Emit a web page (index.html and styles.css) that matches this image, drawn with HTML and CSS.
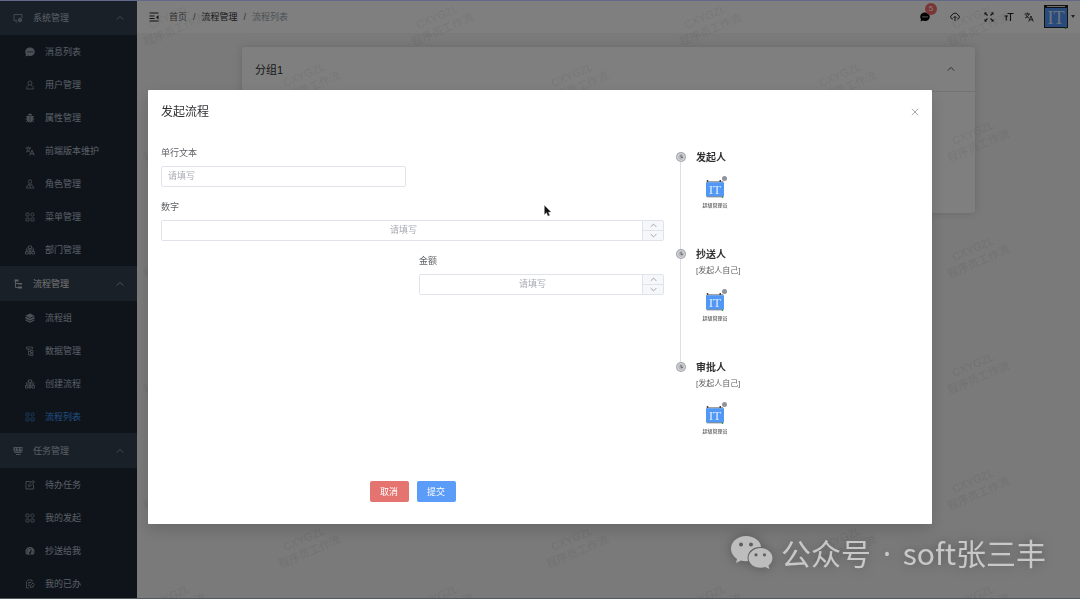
FILE: index.html
```
<!DOCTYPE html>
<html lang="zh-CN">

<head>
    <meta charset="UTF-8">
    <meta name="viewport" content="width=device-width, initial-scale=1.0">
    <title>流程列表</title>
    <link rel="stylesheet" href="styles.css">
</head>

<body>
    <!-- icon set -->
    <svg class="sprite" aria-hidden="true">
        <symbol id="i-monitor" viewBox="0 0 20 20"><path d="M8 15H2V3h16v7M5 18h4" fill="none" stroke="currentColor" stroke-width="1.6"/><circle cx="14" cy="14" r="3" fill="none" stroke="currentColor" stroke-width="2"/><path d="M14 9v10M9.500 11.500l9 5M9.500 16.500l9-5" stroke="currentColor" stroke-width="1"/></symbol>
        <symbol id="i-chat" viewBox="0 0 20 20"><path fill-rule="evenodd" fill="currentColor" d="M10 1c5.500 0 9.500 3.500 9.500 8.500S15.500 18 10 18c-1.500 0-3-.3-4.200-.8L1 19l1.200-4.200C1 13.300.5 11.500.5 9.500.5 4.500 4.500 1 10 1zM5 8.500v2.500h2.200V8.500zm4 0v2.500h2.200V8.500zm4 0v2.500h2.200V8.500z"/></symbol>
        <symbol id="i-user" viewBox="0 0 20 20"><circle cx="10" cy="6" r="4" fill="none" stroke="currentColor" stroke-width="1.500"/><path d="M3 18c0-4 2-7 5-8M17 18c0-4-2-7-5-8M3 18h14" fill="none" stroke="currentColor" stroke-width="1.500"/></symbol>
        <symbol id="i-bug" viewBox="0 0 20 20"><path fill="currentColor" d="M6 5a4 4 0 0 1 8 0zM4 6h5.500v13C6 18.500 4 16 4 13zM10.500 6H16v7c0 3-2 5.500-5.500 6z"/><path d="M5 9L2 6M4 12H1M5 15l-3 3M15 9l3-3M16 12h3M15 15l3 3" stroke="currentColor" stroke-width="1.800"/></symbol>
        <symbol id="i-lang" viewBox="0 0 20 20"><path d="M1 4h11M6.500 1v3M10 4c-1 4-4 7-8 8M4 6c1 3 3 5 6 6M9.500 19L14 8l4.500 11M11 15.500h6" fill="none" stroke="currentColor" stroke-width="1.800"/></symbol>
        <symbol id="i-role" viewBox="0 0 20 20"><circle cx="10" cy="5" r="3.500" fill="none" stroke="currentColor" stroke-width="1.500"/><path d="M8 9L2 18h16L12 9M10 11v7M8 14l2-3 2 3" fill="none" stroke="currentColor" stroke-width="1.500"/></symbol>
        <symbol id="i-grid" viewBox="0 0 20 20"><g fill="none" stroke="currentColor" stroke-width="1.600"><rect x="2" y="2" width="6" height="6" rx="1"/><circle cx="15" cy="5" r="3.200"/><rect x="2" y="12" width="6" height="6" rx="1"/><rect x="12" y="12" width="6" height="6" rx="1"/></g></symbol>
        <symbol id="i-tree" viewBox="0 0 20 20"><path d="M7 2h6v5H7zM10 7v11M3.500 13v-3h13v3M1 13h5v5H1zM8 13h4v5H8zM14 13h5v5h-5zM5 5L2 10M15 5l3 5" fill="none" stroke="currentColor" stroke-width="1.600"/></symbol>
        <symbol id="i-flow" viewBox="0 0 20 20"><path d="M5 3v14h5M5 9h5" fill="none" stroke="currentColor" stroke-width="1.800"/><path fill="currentColor" d="M3 1h8v4H3zM10 8h8v3h-8zM10 15h8v4h-8z"/></symbol>
        <symbol id="i-layers" viewBox="0 0 20 20"><path fill="currentColor" d="M10 1l9 4.500-9 4.500-9-4.500zM1 7l9 4.500L19 7v4l-9 4.500L1 11zM1 12.500L10 17l9-4.500V15l-9 4.500L1 15z"/></symbol>
        <symbol id="i-data" viewBox="0 0 20 20"><path d="M3 6V2h12v4zM7 6v12h4M7 11h4M11 9h5v4h-5zM11 15h5v4h-5z" fill="none" stroke="currentColor" stroke-width="1.500"/></symbol>
        <symbol id="i-task" viewBox="0 0 20 20"><path fill="currentColor" fill-rule="evenodd" d="M1 2h18v9H1zM4 4v5h1.500V4zm4 0v1.500h2V9h1.500V4zm6 0v1.500h2V9h1V4zM3 12h14v2H3zM6 16h9v2H6z"/></symbol>
        <symbol id="i-edit" viewBox="0 0 20 20"><path d="M11 3H2v15h15V9M7 13l1-4 8-8 3 3-8 8zM14 3l3 3" fill="none" stroke="currentColor" stroke-width="1.700"/></symbol>
        <symbol id="i-gauge" viewBox="0 0 20 20"><path fill="currentColor" fill-rule="evenodd" d="M10 2a9 9 0 0 1 9 9c0 3-1 5-2 6H3c-1-1-2-3-2-6a9 9 0 0 1 9-9zM9 4v2h2V4zM4.500 6.500v2h2v-2zM3 11v2h2v-2zm12 0v2h2v-2zM12.500 7L9 12.500c-2 1-1 3.500 1 3.500s2.500-1.500 2-3L14 8z"/></symbol>
        <symbol id="i-done" viewBox="0 0 20 20"><path d="M8 18H3V5l3-3h8v5M6 7h6M6 10h4M6 13h3M10 17l1-4 5-5 3 3-5 5zM15 17l3-2" fill="none" stroke="currentColor" stroke-width="1.500"/></symbol>
        <symbol id="i-up" viewBox="0 0 10 10"><path d="M1 7l4-4 4 4" fill="none" stroke="currentColor"/></symbol>
        <symbol id="i-down" viewBox="0 0 10 10"><path d="M1 3l4 4 4-4" fill="none" stroke="currentColor"/></symbol>
        <symbol id="i-fold" viewBox="0 0 20 20"><path d="M1 2h18M1 8h10M1 13h10M1 18h18" stroke="currentColor" stroke-width="2"/><path d="M19 6v9l-5-4.500z" fill="currentColor"/></symbol>
        <symbol id="i-cloud" viewBox="0 0 20 20"><path d="M6 14H5a4 4 0 0 1-1-7.800 6.500 6.500 0 0 1 12 0A4 4 0 0 1 15 14h-1M10 18V9M7 12l3-3 3 3" fill="none" stroke="currentColor" stroke-width="1.900"/></symbol>
        <symbol id="i-full" viewBox="0 0 20 20"><path d="M2 2l5 5M18 2l-5 5M2 18l5-5M18 18l-5-5" stroke="currentColor" stroke-width="2.200"/><path d="M1 1h5L1 6zM19 1v5l-5-5zM1 19v-5l5 5zM19 19h-5l5-5z" fill="currentColor"/></symbol>
        <symbol id="i-size" viewBox="0 0 20 20"><path d="M7 3h12M13 2v16M1 8h7M4.500 8v9" stroke="currentColor" stroke-width="2.200"/></symbol>
        <symbol id="i-it" viewBox="0 0 24 24"><path fill="#222" d="M0 0h24v23H0z"/><path fill="#ddd" d="M3 1h18v1H3z"/><path fill="#5197f6" d="M1 3h22v19H1z"/><circle cx="21.500" cy="23" r="1" fill="#1b9c2c"/><text class="logo-text" x="12" y="19" text-anchor="middle">IT</text></symbol>
        <symbol id="i-it-small" viewBox="0 0 24 24"><path fill="#444" d="M1 0h2v2H1zM18 0h2v2h-2zM1 2h22v1H1z"/><path fill="#5197f6" d="M0 3h24v19H0z"/><path fill="#456" d="M1 22h22v1H1z"/><circle cx="22" cy="23" r="1" fill="#1b9c2c"/><text class="logo-text" x="12" y="19" text-anchor="middle">IT</text></symbol>
        <symbol id="i-clock" viewBox="0 0 10 10"><circle cx="5" cy="5" r="5" fill="#a5a8ae"/><circle cx="5" cy="5" r="3.500" fill="#b8babf" stroke="#f0f0f2" stroke-width=".6"/><path d="M5 2.800V5.400h2" fill="none" stroke="#606266" stroke-width=".9"/></symbol>
    </svg>

    <div class="app">
        <nav class="sidebar" aria-label="主菜单">
            <button class="group" type="button"><svg class="icon"><use href="#i-monitor"/></svg>系统管理<svg class="arrow"><use href="#i-up"/></svg></button>
            <ul>
                <li><a href="#"><svg class="icon"><use href="#i-chat"/></svg>消息列表</a></li>
                <li><a href="#"><svg class="icon"><use href="#i-user"/></svg>用户管理</a></li>
                <li><a href="#"><svg class="icon"><use href="#i-bug"/></svg>属性管理</a></li>
                <li><a href="#"><svg class="icon"><use href="#i-lang"/></svg>前端版本维护</a></li>
                <li><a href="#"><svg class="icon"><use href="#i-role"/></svg>角色管理</a></li>
                <li><a href="#"><svg class="icon"><use href="#i-grid"/></svg>菜单管理</a></li>
                <li><a href="#"><svg class="icon"><use href="#i-tree"/></svg>部门管理</a></li>
            </ul>
            <button class="group opened" type="button"><svg class="icon"><use href="#i-flow"/></svg>流程管理<svg class="arrow"><use href="#i-up"/></svg></button>
            <ul>
                <li><a href="#"><svg class="icon"><use href="#i-layers"/></svg>流程组</a></li>
                <li><a href="#"><svg class="icon"><use href="#i-data"/></svg>数据管理</a></li>
                <li><a href="#"><svg class="icon"><use href="#i-tree"/></svg>创建流程</a></li>
                <li><a href="#" class="active"><svg class="icon"><use href="#i-grid"/></svg>流程列表</a></li>
            </ul>
            <button class="group" type="button"><svg class="icon"><use href="#i-task"/></svg>任务管理<svg class="arrow"><use href="#i-up"/></svg></button>
            <ul>
                <li><a href="#"><svg class="icon"><use href="#i-edit"/></svg>待办任务</a></li>
                <li><a href="#"><svg class="icon"><use href="#i-grid"/></svg>我的发起</a></li>
                <li><a href="#"><svg class="icon"><use href="#i-gauge"/></svg>抄送给我</a></li>
                <li><a href="#"><svg class="icon"><use href="#i-done"/></svg>我的已办</a></li>
            </ul>
        </nav>

        <div class="content">
            <header class="navbar">
                <button class="tool" type="button" aria-label="折叠菜单"><svg class="icon"><use href="#i-fold"/></svg></button>
                <div class="breadcrumb">
                    <a href="#">首页</a><i>/</i><a href="#" class="strong">流程管理</a><i>/</i><span>流程列表</span>
                </div>
                <div class="tools">
                    <button class="tool message" type="button" aria-label="消息"><svg class="icon"><use href="#i-chat"/></svg><span class="badge">5</span></button>
                    <button class="tool upload" type="button" aria-label="上传"><svg class="icon"><use href="#i-cloud"/></svg></button>
                    <button class="tool" type="button" aria-label="全屏"><svg class="icon"><use href="#i-full"/></svg></button>
                    <button class="tool" type="button" aria-label="字号"><svg class="icon"><use href="#i-size"/></svg></button>
                    <button class="tool" type="button" aria-label="语言"><svg class="icon"><use href="#i-lang"/></svg></button>
                    <button class="account" type="button" aria-label="账户"><svg class="logo"><use href="#i-it"/></svg><span class="caret"></span></button>
                </div>
            </header>
            <main>
                <section class="card">
                    <div class="card-header"><span>分组1</span><svg class="arrow"><use href="#i-up"/></svg></div>
                    <div class="card-body"></div>
                </section>
            </main>
            <svg class="watermark" aria-hidden="true">
                <defs>
                    <pattern id="wm" width="268" height="116" patternUnits="userSpaceOnUse">
                        <g transform="translate(35 24) rotate(-23)"><text x="0" y="-4">CXYGZL</text><text x="0" y="10">程序员工作流</text></g>
                        <g transform="translate(170 82) rotate(-23)"><text x="0" y="-4">CXYGZL</text><text x="0" y="10">程序员工作流</text></g>
                    </pattern>
                </defs>
                <rect width="100%" height="100%" fill="url(#wm)"/>
            </svg>
        </div>
    </div>

    <div class="overlay">
        <div class="dialog" role="dialog" aria-labelledby="dialogTitle">
            <div class="dialog-header">
                <h2 id="dialogTitle">发起流程</h2>
                <button class="close" type="button" aria-label="关闭"><svg viewBox="0 0 10 10"><path d="M1 1l8 8M9 1l-8 8" stroke="currentColor"/></svg></button>
            </div>
            <div class="dialog-body">
                <form class="form">
                    <div class="fields">
                        <div class="field">
                            <label for="text">单行文本</label>
                            <div class="box"><input id="text" type="text" placeholder="请填写"></div>
                        </div>
                        <div class="field wide">
                            <label for="number">数字</label>
                            <div class="box number">
                                <input id="number" type="text" inputmode="numeric" placeholder="请填写">
                                <div class="stepper">
                                    <button type="button" aria-label="增加"><svg><use href="#i-up"/></svg></button>
                                    <button type="button" aria-label="减少"><svg><use href="#i-down"/></svg></button>
                                </div>
                            </div>
                        </div>
                        <div class="field right">
                            <label for="amount">金额</label>
                            <div class="box number">
                                <input id="amount" type="text" inputmode="decimal" placeholder="请填写">
                                <div class="stepper">
                                    <button type="button" aria-label="增加"><svg><use href="#i-up"/></svg></button>
                                    <button type="button" aria-label="减少"><svg><use href="#i-down"/></svg></button>
                                </div>
                            </div>
                        </div>
                    </div>
                    <div class="actions">
                        <button class="btn danger" type="button">取消</button>
                        <button class="btn primary" type="button">提交</button>
                    </div>
                </form>

                <ol class="timeline">
                    <li>
                        <svg class="node"><use href="#i-clock"/></svg>
                        <h3>发起人</h3>
                        <div class="person"><div class="avatar"><svg class="logo"><use href="#i-it-small"/></svg><span class="dot"></span></div><span>超级管理员</span></div>
                    </li>
                    <li>
                        <svg class="node"><use href="#i-clock"/></svg>
                        <h3>抄送人</h3>
                        <p>[发起人自己]</p>
                        <div class="person"><div class="avatar"><svg class="logo"><use href="#i-it-small"/></svg><span class="dot"></span></div><span>超级管理员</span></div>
                    </li>
                    <li>
                        <svg class="node"><use href="#i-clock"/></svg>
                        <h3>审批人</h3>
                        <p>[发起人自己]</p>
                        <div class="person"><div class="avatar"><svg class="logo"><use href="#i-it-small"/></svg><span class="dot"></span></div><span>超级管理员</span></div>
                    </li>
                </ol>
            </div>
        </div>
    </div>

    <div class="brand">
        <svg viewBox="0 0 42 34"><path fill="#bdbdbd" fill-rule="evenodd" d="M15 0c8.300 0 15 5.500 15 11-9-.5-15 6-13 14-2 .4-5 .2-7-.4L5 27l1-4C2.500 20.500 0 17 0 13 0 5.500 6.700 0 15 0zM10 6.500a2 2 0 1 0 0 4 2 2 0 0 0 0-4zm10 0a2 2 0 1 0 0 4 2 2 0 0 0 0-4z"/><path fill="#bdbdbd" fill-rule="evenodd" d="M29.500 12C36 12 41.500 16.500 41.500 22c0 3-1.500 5.500-4 7.500l.8 3.500-4-2c-1.500.5-3 .8-4.800.8C23 31.800 17.500 27.500 17.500 22S23 12 29.500 12zm-4.500 5.200a1.600 1.600 0 1 0 0 3.200 1.600 1.600 0 0 0 0-3.200zm8.500 0a1.600 1.600 0 1 0 0 3.200 1.600 1.600 0 0 0 0-3.200z"/></svg>
        <span>公众号<span class="sep"> · </span>soft张三丰</span>
    </div>

    <svg class="cursor" viewBox="0 0 8 12" aria-hidden="true"><path d="M.5.500v9l2-2 1.500 3.500 1.600-.7L4.200 7H7z" fill="#111" stroke="#888" stroke-width=".4"/></svg>
</body>

</html>
```

FILE: styles.css
```
* {
    box-sizing: border-box;
}

body {
    margin: 0;
    font-family: "Liberation Sans", "Noto Sans CJK SC", sans-serif;
    font-size: 9px;
    color: #606266;
    overflow: hidden;
}

/* thin edges of the window */
body::before,
body::after {
    content: "";
    position: fixed;
    left: 0;
    right: 0;
    top: 0;
    z-index: 2;
    height: 1px;
    background-color: #62688a;
}

body::after {
    top: auto;
    bottom: 0;
    background-color: #4f5a62;
}

button {
    border: none;
    background: none;
    padding: 0;
    font: inherit;
    color: inherit;
    cursor: pointer;
}

a {
    color: inherit;
    text-decoration: none;
}

ul, ol, h2, h3, p {
    margin: 0;
    padding: 0;
    list-style: none;
}

.sprite {
    position: absolute;
    width: 0;
    height: 0;
}

.icon {
    width: 10px;
    height: 10px;
    flex: none;
}

.arrow {
    width: 8px;
    height: 8px;
    margin-left: auto;
}

.logo {
    display: block;
    width: 24px;
    height: 24px;
}

.logo-text {
    font-family: "Liberation Serif", serif;
    font-size: 18px;
    fill: #dbe9ff;
}

.app {
    display: flex;
    height: 100vh;
}

/* sidebar */
.sidebar {
    width: 137px;
    flex: none;
    overflow: hidden;
    background-color: #1f2937;
    color: #b4bfcc;
}

.sidebar .icon {
    opacity: 0.8;
}

.group {
    display: flex;
    align-items: center;
    gap: 10px;
    width: 100%;
    height: 35px;
    padding: 0 13px;
    background-color: #344150;
}

.group .arrow {
    opacity: 0.8;
}

.group.opened {
    color: #e4e5e7;
}

.sidebar a {
    display: flex;
    align-items: center;
    gap: 10px;
    height: 33px;
    padding-left: 25px;
}

.sidebar a.active {
    color: #409eff;
}

/* page */
.content {
    position: relative;
    flex: 1;
    background-color: #f4f4f4;
}

.navbar {
    display: flex;
    align-items: center;
    height: 33px;
    padding: 0 5px 0 12px;
    background-color: #fff;
    color: #222;
}

.tool {
    position: relative;
    display: flex;
}

.breadcrumb {
    display: flex;
    align-items: center;
    margin-left: 10px;
    color: #606266;
}

.breadcrumb i {
    margin: 0 6px;
    font-style: normal;
}

.breadcrumb .strong {
    color: #303133;
}

.breadcrumb span {
    color: #999fa8;
}

.tools {
    display: flex;
    align-items: center;
    gap: 10px;
    margin-left: auto;
}

.message {
    margin-right: 10px;
    color: #000;
}

.upload {
    margin-right: 14px;
}

/* unread counter over the message icon */
.badge {
    position: absolute;
    left: 5px;
    top: -9px;
    width: 12px;
    height: 12px;
    border-radius: 6px;
    background-color: #f56c6c;
    color: #fff;
    font-size: 8px;
    line-height: 12px;
    text-align: center;
}

.account {
    display: flex;
    align-items: center;
    gap: 3px;
}

.caret {
    border: 2px solid transparent;
    border-top: 3px solid #444;
    border-bottom: none;
}

main {
    padding: 14px 105px;
}

.card {
    background-color: #fff;
    border-radius: 3px;
    box-shadow: 0 0 8px rgba(0, 0, 0, 0.15);
}

.card-header {
    display: flex;
    align-items: center;
    height: 45px;
    padding: 0 20px 0 13px;
    border-bottom: 1px solid #e4e7ed;
    font-size: 11px;
    color: #303133;
}

.card-body {
    height: 121px;
}

.watermark {
    position: absolute;
    inset: 0;
    width: 100%;
    height: 100%;
    pointer-events: none;
}

.watermark text {
    font-size: 11px;
    fill: rgba(0, 0, 0, 0.07);
    text-anchor: middle;
}

/* dialog */
.overlay {
    position: fixed;
    inset: 0;
    padding: 15vh 148px 0;
    background-color: rgba(0, 0, 0, 0.5);
}

.dialog {
    background-color: #fff;
    border-radius: 1px;
    box-shadow: 0 6px 16px rgba(0, 0, 0, 0.15);
}

.dialog-header {
    display: flex;
    align-items: center;
    justify-content: space-between;
    padding: 14px 13px 19px;
}

.dialog-header h2 {
    font-size: 12px;
    font-weight: normal;
    line-height: 16px;
    color: #303133;
}

.close {
    display: flex;
    color: #909399;
}

.close svg {
    width: 8px;
    height: 8px;
}

.dialog-body {
    display: grid;
    grid-template-columns: 1fr 243px;
    gap: 12px;
    padding: 0 13px 22px;
}

.form {
    display: flex;
    flex-direction: column;
    justify-content: space-between;
}

.fields {
    display: grid;
    grid-template-columns: 1fr 1fr;
    gap: 6px 13px;
}

.wide {
    grid-column: 1 / 3;
}

.right {
    grid-column: 2;
}

.field label {
    display: block;
    padding-top: 2px;
    line-height: 25px;
}

.box {
    display: flex;
    height: 21px;
    border: 1px solid #e0e3e9;
    border-radius: 2px;
    overflow: hidden;
}

.box input {
    flex: 1;
    min-width: 0;
    padding: 0 6px;
    border: none;
    outline: none;
    font: inherit;
}

.box input::placeholder {
    color: #a8abb2;
}

.number input {
    padding: 0 6px 0 9px;
    text-align: center;
}

.stepper {
    display: flex;
    flex-direction: column;
    width: 21px;
    border-left: 1px solid #e0e3e9;
    background-color: #f5f7fa;
    color: #808388;
}

.stepper button {
    display: flex;
    align-items: center;
    justify-content: center;
    flex: 1;
}

.stepper button + button {
    border-top: 1px solid #e0e3e9;
}

.stepper svg {
    width: 7px;
    height: 7px;
}

.actions {
    display: flex;
    justify-content: center;
    gap: 8px;
}

.btn {
    width: 39px;
    height: 21px;
    border-radius: 2px;
    color: #fff;
}

.danger {
    background-color: #e57470;
}

.primary {
    background-color: #5a9cf8;
}

.timeline {
    padding-top: 11px;
}

.timeline li {
    position: relative;
    padding: 0 0 38px 20px;
}

.timeline li:last-child {
    padding-bottom: 67px;
}

/* line joining one node to the next */
.timeline li:not(:last-child)::before {
    content: "";
    position: absolute;
    left: 4px;
    top: 12px;
    height: 100%;
    border-left: 1px solid #dcdfe6;
}

.node {
    position: absolute;
    left: 0;
    top: 2px;
    width: 10px;
    height: 10px;
}

.timeline h3 {
    font-size: 10px;
    line-height: 16px;
    color: #303133;
}

.timeline p {
    font-size: 8px;
    line-height: 16px;
}

.person {
    display: flex;
    flex-direction: column;
    align-items: center;
    gap: 3px;
    width: 38px;
    margin-top: 14px;
    font-size: 5px;
    line-height: 8px;
    color: #303133;
}

.avatar {
    position: relative;
}

.avatar .logo {
    width: 18px;
    height: 18px;
}

.dot {
    position: absolute;
    right: -3px;
    top: -4px;
    width: 5px;
    height: 5px;
    border-radius: 50%;
    background-color: #909399;
}

/* account signature */
.brand {
    position: fixed;
    right: 34px;
    bottom: 23px;
    display: flex;
    align-items: center;
    gap: 8px;
    font-family: "Noto Sans CJK SC", sans-serif;
    font-size: 30px;
    line-height: 44px;
    color: #c8c8c8;
    filter: drop-shadow(0 0 6px rgba(0, 0, 0, 0.3));
}

.brand svg {
    width: 42px;
    height: 34px;
}

.brand .sep {
    font-family: "Noto Sans", sans-serif;
    margin: 0 4px;
}

.cursor {
    position: fixed;
    left: 544px;
    top: 205px;
    width: 8px;
    height: 12px;
}
```
